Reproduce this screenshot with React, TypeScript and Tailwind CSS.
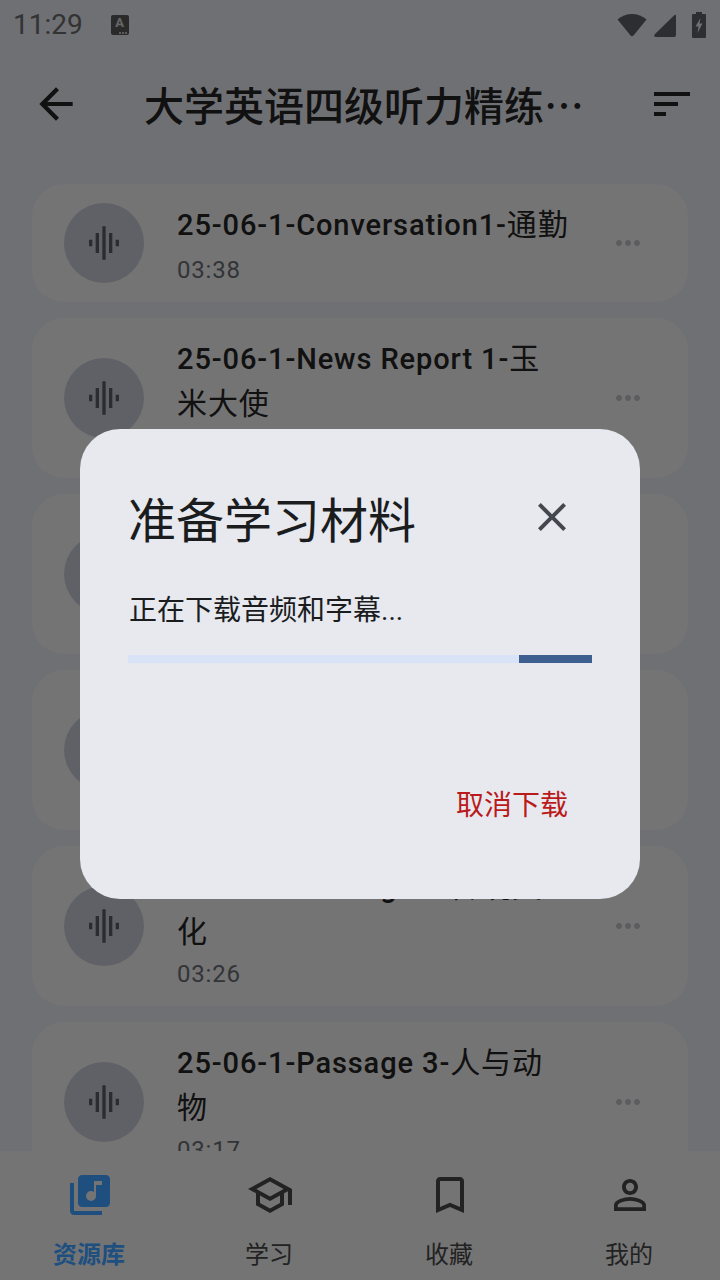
import { MdArrowBack, MdSort, MdGraphicEq, MdMoreHoriz, MdClose, MdLibraryMusic, MdOutlineSchool, MdBookmarkBorder, MdPersonOutline } from 'react-icons/md';

// each title line: latin part is medium weight, the cjk part stays regular
const TRACKS = [
  { id: 1, lines: [['25-06-1-Conversation1-', '通勤']], time: '03:38' },
  { id: 2, lines: [['25-06-1-News Report 1-', '玉'], ['', '米大使']], time: '03:12' },
  { id: 3, lines: [['25-06-1-News Report 2-', '科'], ['', '技创新']], time: '03:05' },
  { id: 4, lines: [['25-06-1-Passage 1-', '健康生'], ['', '活']], time: '03:21' },
  { id: 5, lines: [['25-06-1-Passage 2-', '传统文'], ['', '化']], time: '03:26' },
  { id: 6, lines: [['25-06-1-Passage 3-', '人与动'], ['', '物']], time: '03:17' },
];

const NAV_ITEMS = [
  { label: '资源库', icon: MdLibraryMusic, active: true },
  { label: '学习', icon: MdOutlineSchool, active: false },
  { label: '收藏', icon: MdBookmarkBorder, active: false },
  { label: '我的', icon: MdPersonOutline, active: false },
];

function StatusBar() {
  return (
    <div className="h-[50px] shrink-0 flex items-center px-[13px] text-[#666]">
      <span className="text-[28px] leading-none">11:29</span>
      <div className="relative ml-[28px] w-[18px] h-[20px] rounded-[2px] bg-[#555] flex items-start justify-center">
        <span className="text-[13px] leading-[16px] font-bold text-[#d0d0d0]">A</span>
        <div className="absolute right-[2px] bottom-[1px] flex gap-[1px]">
          <div className="w-[2px] h-[2px] bg-[#bbb]" />
          <div className="w-[2px] h-[2px] bg-[#bbb]" />
          <div className="w-[2px] h-[2px] bg-[#bbb]" />
        </div>
      </div>
      <div className="ml-auto flex items-center">
        <svg width="32" height="26" viewBox="0 0 32 26" className="fill-[#5a5c62]">
          <path d="M1.5 7.5 C 9 0, 23 0, 30.5 7.5 L17.5 23.5 Q16 25 14.5 23.5 Z" />
        </svg>
        <svg width="24" height="24" viewBox="0 0 24 24" className="ml-[5px] fill-[#5a5c62]">
          <path d="M21 2.5 Q23 1 23 3 V22 Q23 24 21 24 H3 Q0 24 2 21 Z" />
        </svg>
        <svg width="14" height="26" viewBox="0 0 14 26" className="ml-[15px] mr-[1px] fill-[#5a5c62]">
          <path fillRule="evenodd" d="M4 0h6v2h3a1 1 0 0 1 1 1v22a1 1 0 0 1-1 1H1a1 1 0 0 1-1-1V3a1 1 0 0 1 1-1h3V0zM8.5 6 3.5 14.5H6.5L5.5 21 10.5 11.5H7.5L8.5 6z" />
        </svg>
      </div>
    </div>
  );
}

function Header() {
  return (
    <div className="h-[108px] shrink-0 flex items-center text-[#222]">
      <div className="w-[112px] flex justify-center">
        <MdArrowBack size={50} />
      </div>
      <h1 className="ml-[32px] w-[440px] text-[40px] leading-none font-medium whitespace-nowrap font-['Noto_Sans_CJK_SC',sans-serif]">
        大学英语四级听力精练…
      </h1>
      <div className="ml-auto w-[96px] flex justify-center">
        <MdSort size={48} />
      </div>
    </div>
  );
}

function TrackCard({ lines, time }: { lines: string[][]; time: string }) {
  const twoLines = lines.length > 1;
  return (
    <div className="shrink-0 flex items-center rounded-[32px] bg-[#e8e8e8] pl-[32px] pr-[42px]">
      <div className="w-[80px] h-[80px] rounded-full bg-[#c0c2cc] flex items-center justify-center text-[#545860] shrink-0">
        <MdGraphicEq size={40} />
      </div>
      <div className="ml-[33px] flex-1 pt-[18px]">
        {lines.map(([latin, cjk]) => (
          <div key={latin + cjk} className="h-[45px] text-[29px] leading-[45px] text-[#222] tracking-[0.9px] whitespace-nowrap">
            <span className="font-medium">{latin}</span>
            <span className="text-[30px]">{cjk}</span>
          </div>
        ))}
        <div className={`text-[24px] leading-[32px] text-[#666870] tracking-[0.8px] ${twoLines ? 'mt-[4px] mb-[16px]' : 'mt-[7px] mb-[16px]'}`}>
          {time}
        </div>
      </div>
      <MdMoreHoriz size={36} className="text-[#b8b8bc]" />
    </div>
  );
}

function BottomNav() {
  return (
    <div className="h-[129px] shrink-0 bg-[#e8e8e8] grid grid-cols-4">
      {NAV_ITEMS.map((item) => {
        const Icon = item.icon;
        return (
          <div key={item.label} className="flex flex-col items-center pt-[20px]">
            <Icon size={48} className={item.active ? 'text-[#3e9fff]' : 'text-[#444]'} />
            <span className={`mt-[18px] mr-[2px] text-[24px] leading-[36px] ${item.active ? 'font-bold text-[#3e9fff]' : 'text-[#444]'}`}>
              {item.label}
            </span>
          </div>
        );
      })}
    </div>
  );
}

function DownloadDialog() {
  return (
    <div className="absolute inset-0 bg-black/50 flex justify-center items-start pt-[429px]">
      <div className="w-[560px] h-[470px] rounded-[40px] bg-[#e7e9ef] flex flex-col px-[48px]">
        <div className="mt-[56px] flex items-start justify-between">
          <span className="pt-[5px] text-[48px] leading-[64px] text-[#1a1c1e]">准备学习材料</span>
          <MdClose size={48} className="mt-[8px] mr-[16px] text-[#44474e]" />
        </div>
        <div className="mt-[37px] ml-[1px] text-[28px] leading-[40px] text-[#1a1c1e]">正在下载音频和字幕...</div>
        <div className="mt-[24px] h-[8px] bg-[#d9e3f7] flex justify-end">
          <div className="w-[73px] bg-[#3d6090]" />
        </div>
        <div className="mt-[123px] text-right text-[28px] leading-[40px] text-[#ba1a1a] pr-[24px]">取消下载</div>
      </div>
    </div>
  );
}

export default function App() {
  return (
    <div className="relative w-[720px] h-[1280px] overflow-hidden bg-[#dee0e6] flex flex-col font-[Roboto,'Noto_Sans_CJK_SC',sans-serif]">
      <StatusBar />
      <Header />
      <div className="flex-1 min-h-0 overflow-hidden px-[32px] pt-[26px] flex flex-col gap-[16px]">
        {TRACKS.map((t) => (
          <TrackCard key={t.id} lines={t.lines} time={t.time} />
        ))}
      </div>
      <BottomNav />
      <DownloadDialog />
    </div>
  );
}
